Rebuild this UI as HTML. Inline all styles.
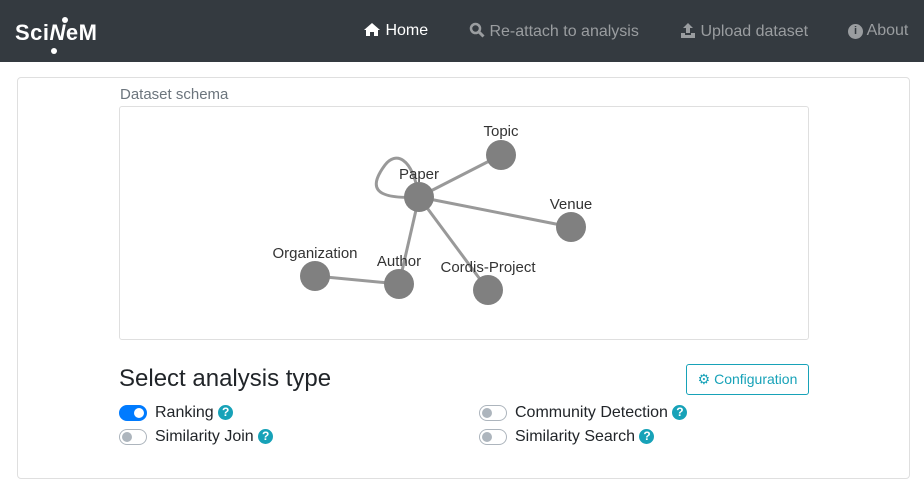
<!DOCTYPE html>
<html><head><style>
html,body{margin:0;width:924px;height:452px;overflow:hidden;background:#fff;font-family:"Liberation Sans",sans-serif;}
.nav{position:absolute;left:0;top:0;width:924px;height:62px;background:#343a40;}
.nav a{position:absolute;top:22px;font-size:16px;color:#9a9da0;white-space:nowrap}
.nav svg{vertical-align:-2px}
.card{position:absolute;left:17px;top:77px;width:891px;height:400px;border:1px solid #dfdfdf;border-radius:4px;}
.lbl{position:absolute;font-size:16px;color:#212529;white-space:nowrap}
.q{display:inline-block;width:15px;height:15px;border-radius:50%;background:#17a2b8;color:#fff;font-size:12px;font-weight:bold;text-align:center;line-height:15px;vertical-align:1px;}
.tg{position:absolute;width:26px;height:14px;border-radius:8px;border:1px solid #adb5bd;background:#fff;}
.tg i{position:absolute;left:2px;top:2px;width:10px;height:10px;border-radius:50%;background:#adb5bd;}
.tg.on{background:#007bff;border-color:#007bff}.tg.on i{left:14px;background:#fff}
</style></head><body>
<div class="nav">
<div style="position:absolute;left:15px;top:20px;color:#fff;font-weight:bold;font-size:22px;letter-spacing:0.5px">Sci<span style="font-style:italic">N</span>eM</div>
<svg style="position:absolute;left:48px;top:16px" width="20" height="40"><circle cx="17" cy="4" r="3" fill="#fff"/><circle cx="6" cy="35" r="3" fill="#fff"/></svg>
<a style="left:363px;color:#fff"><svg width="18" height="15" viewBox="0 0 18 15"><path d="M9 1 L1 8 L3 8 L3 14 L7 14 L7 10 L11 10 L11 14 L15 14 L15 8 L17 8 Z" fill="#fff"/></svg> Home</a>
<a style="left:469px"><svg width="16" height="16" viewBox="0 0 16 16"><circle cx="6.5" cy="6.5" r="4.5" stroke="#9a9da0" stroke-width="2.5" fill="none"/><line x1="10" y1="10" x2="14.5" y2="14.5" stroke="#9a9da0" stroke-width="3"/></svg> Re-attach to analysis</a>
<a style="left:680px"><svg width="16" height="16" viewBox="0 0 16 16"><path d="M8 1 L3 6 L6 6 L6 11 L10 11 L10 6 L13 6 Z M1 11 L1 16 L15 16 L15 11 L11 11 L11 13 L5 13 L5 11 Z" fill="#9a9da0"/></svg> Upload dataset</a>
<a style="left:848px"><span style="display:inline-block;width:15px;height:15px;border-radius:50%;background:#9a9da0;color:#343a40;font-size:11px;text-align:center;line-height:15px;font-weight:bold;vertical-align:1px">i</span> About</a>
</div>
<div class="card"></div>
<div style="position:absolute;left:120px;top:86px;font-size:15px;color:#6c757d">Dataset schema</div>
<div style="position:absolute;left:119px;top:106px;width:688px;height:232px;border:1px solid #dfdfdf;border-radius:3px"></div>
<svg style="position:absolute;left:0;top:0" width="924" height="452" font-family="Liberation Sans" font-size="15" fill="#333" text-anchor="middle">
<g stroke="#999" stroke-width="3" fill="none">
<path d="M419 197 C370 200 370 185 385 165 C395 152 412 155 419 197"/>
<line x1="419" y1="197" x2="501" y2="155"/><line x1="419" y1="197" x2="571" y2="227"/>
<line x1="419" y1="197" x2="488" y2="290"/><line x1="419" y1="197" x2="399" y2="284"/>
<line x1="315" y1="276" x2="399" y2="284"/></g>
<g fill="#808080"><circle cx="419" cy="197" r="15"/><circle cx="501" cy="155" r="15"/><circle cx="571" cy="227" r="15"/><circle cx="488" cy="290" r="15"/><circle cx="399" cy="284" r="15"/><circle cx="315" cy="276" r="15"/></g>
<text x="501" y="136">Topic</text><text x="419" y="179">Paper</text><text x="571" y="209">Venue</text>
<text x="315" y="258">Organization</text><text x="399" y="266">Author</text><text x="488" y="272">Cordis-Project</text>
</svg>
<div style="position:absolute;left:119px;top:365px;font-size:24px;color:#212529">Select analysis type</div>
<div style="position:absolute;left:686px;top:364px;width:121px;height:29px;border:1px solid #17a2b8;border-radius:3px;color:#17a2b8;font-size:14px;line-height:29px;text-align:center">&#9881; Configuration</div>
<div class="tg on" style="left:119px;top:405px"><i></i></div><div class="lbl" style="left:155px;top:404px">Ranking <span class="q">?</span></div>
<div class="tg" style="left:119px;top:429px"><i></i></div><div class="lbl" style="left:155px;top:428px">Similarity Join <span class="q">?</span></div>
<div class="tg" style="left:479px;top:405px"><i></i></div><div class="lbl" style="left:515px;top:404px">Community Detection <span class="q">?</span></div>
<div class="tg" style="left:479px;top:429px"><i></i></div><div class="lbl" style="left:515px;top:428px">Similarity Search <span class="q">?</span></div>
</body></html>
